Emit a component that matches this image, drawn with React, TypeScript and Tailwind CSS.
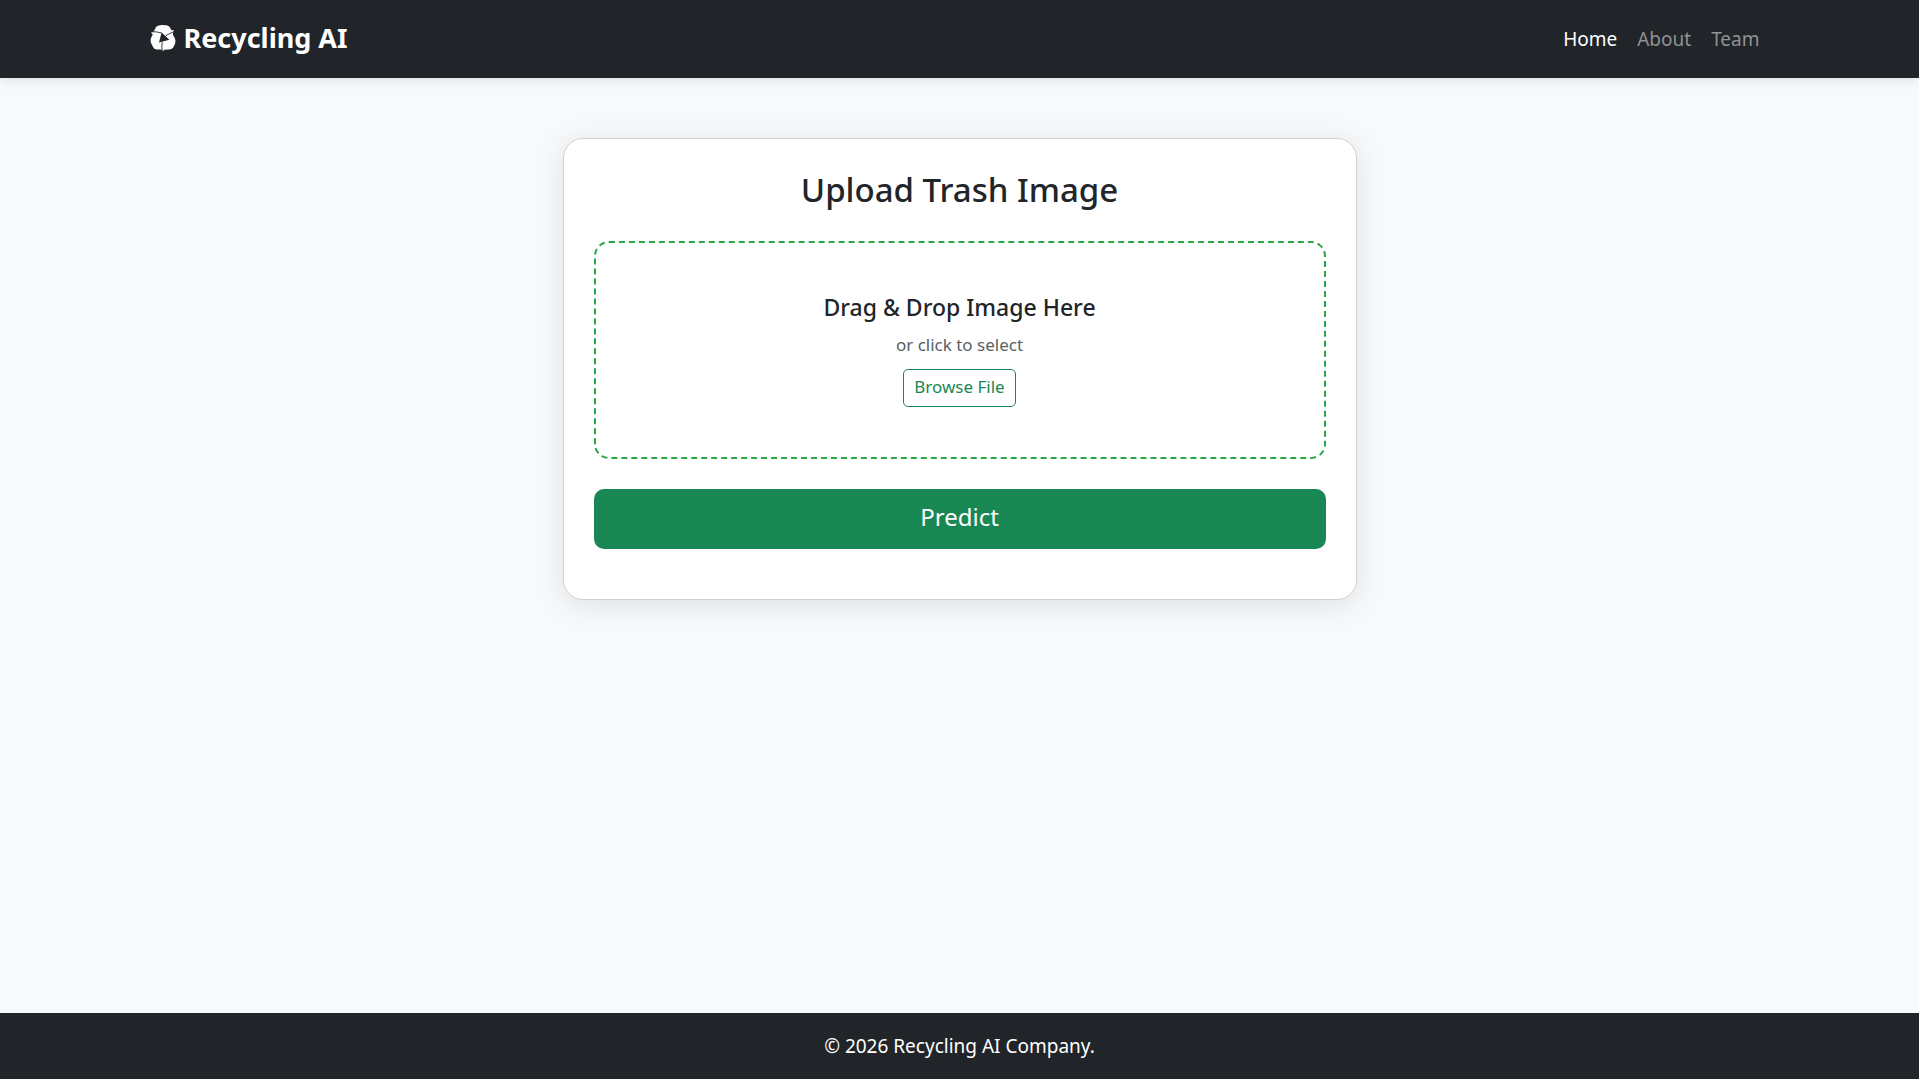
import React, { useRef, useState } from "react";

function RecycleIcon() {
  return (
    <svg viewBox="0 0 26 28" className="h-7 w-[26px] shrink-0" aria-hidden="true">
      <path
        d="M8 1.8 L11.5 1 L16.5 1.2 Q18.8 1.6 20 3.6 L21.4 6.2 L23.8 6 L22.8 10.4 L25 14.4 Q26 17 25 20 L23.2 23.4 Q22 25.4 19 25.6 L14.4 25.8 L12.6 27.6 L11.4 25.6 L6.4 25.6 Q4 25.4 3 23 L.8 18.6 Q.1 16.4 1 14 L2.8 10.4 L1 8.6 L4 7.2 L5.6 3.8 Q6.4 2.2 8 1.8 Z"
        fill="#fff"
      />
      <path d="M11.6 8.6 L19.4 15.8 L9 18.4 Z" fill="#212529" />
      <path
        d="M1.6 7.8 L6 7.8 L11.8 9 M15.6 12 L18 10.4 L24 7.6 M12.4 27.4 L11.8 23 L12.2 18"
        fill="none"
        stroke="#212529"
        strokeWidth="0.9"
      />
    </svg>
  );
}

const links = [
  { label: "Home", active: true },
  { label: "About", active: false },
  { label: "Team", active: false },
];

export default function App() {
  const fileInput = useRef<HTMLInputElement>(null);
  const [, setFile] = useState<File | null>(null);

  return (
    <div className="flex min-h-screen flex-col bg-[#f8f9fb] font-['Noto_Sans',sans-serif] text-[19px] text-[#212529]">
      <header className="bg-[#212529] shadow-[0_2px_10px_rgba(0,0,0,0.1)]">
        <nav className="mx-auto flex h-[78px] w-full max-w-[1650px] items-center justify-between px-[15px]">
          <a href="#" className="flex items-center gap-2 pb-0.5 text-[27px] font-bold text-white">
            <RecycleIcon />
            Recycling AI
          </a>
          <ul className="flex gap-5 pr-2.5">
            {links.map((link) => (
              <li key={link.label}>
                <a href="#" className={link.active ? "text-white" : "text-[#909294]"}>
                  {link.label}
                </a>
              </li>
            ))}
          </ul>
        </nav>
      </header>

      <main className="flex flex-1 flex-col items-center px-4 py-[60px]">
        <section className="w-full max-w-[794px] rounded-[20px] border border-[#d0d1d2] bg-white px-[30px] pt-[30px] pb-[50px] shadow-[0_5px_30px_rgba(0,0,0,0.1)]">
          <h1 className="mb-[30px] text-center text-[33px] leading-[42px] font-medium">Upload Trash Image</h1>
          <div
            className="mb-[30px] flex flex-col items-center rounded-[15px] border-2 border-dashed border-[#28a745] px-10 py-[50px]"
            onDragOver={(e) => e.preventDefault()}
            onDrop={(e) => {
              e.preventDefault();
              setFile(e.dataTransfer.files[0] ?? null);
            }}
          >
            <h2 className="mb-[10px] text-[23px] leading-7 font-medium">Drag &amp; Drop Image Here</h2>
            <p className="mb-[10px] text-[17px] leading-7 text-[#595f64]">or click to select</p>
            <input
              ref={fileInput}
              type="file"
              accept="image/*"
              aria-label="Image file"
              className="hidden"
              onChange={(e) => setFile(e.target.files?.[0] ?? null)}
            />
            <button
              type="button"
              onClick={() => fileInput.current?.click()}
              className="h-[38px] rounded-[5px] border border-[#198754] px-[10px] pb-0.5 text-[17px] text-[#198754]"
            >
              Browse File
            </button>
          </div>
          <button type="button" className="h-[60px] w-full rounded-[10px] bg-[#198754] pb-1 text-2xl text-white">
            Predict
          </button>
        </section>
      </main>

      <footer className="bg-[#212529] py-[18px] text-center leading-[30px] text-white">
        © 2026 Recycling AI Company.
      </footer>
    </div>
  );
}
